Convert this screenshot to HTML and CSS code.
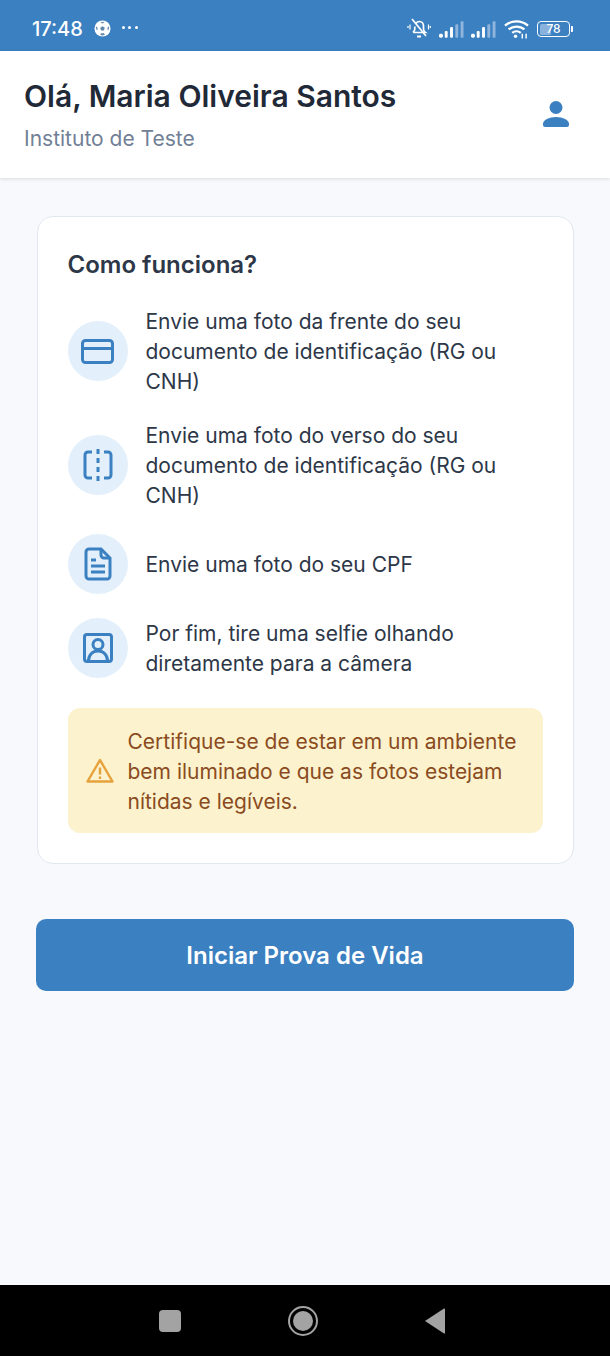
FILE: index.html
```html
<!DOCTYPE html>
<html lang="pt-BR">

<head>
    <meta charset="UTF-8">
    <title>Prova de Vida</title>
    <link rel="stylesheet" href="styles.css">
</head>

<body>
    <div class="status-bar">
        <div class="status-left">
            <span class="hora">17:48</span>
            <svg class="bola" width="17" height="17" viewBox="0 0 18 18">
                <circle cx="9" cy="9" r="8.5" fill="#fff" />
                <path d="M9 6.500l2.400 1.700-.9 2.800h-3l-.9-2.800zM7 1.500L9 2.400l2-.9-.6 1.500L9 3.600l-1.400-.6zM1.800 7l1.500.4.600 2.400-1 1.300zM16.200 7l-1.500.4-.6 2.400 1 1.300zM7.400 14h3.200l.8 1.500-2.400 1-2.400-1z" fill="#5f86ad" />
            </svg>
            <span class="pontos"><i></i><i></i><i></i></span>
        </div>
        <div class="status-right">
            <svg class="campainha" width="24" height="24" viewBox="0 0 24 24" fill="none" stroke="#fff" stroke-width="1.7">
                <path d="M8.600 7.200C9.300 5.600 10.500 4.500 12.500 4.500c2.400 0 4 2 4 4.500v3c0 1.500.5 2.500 1.800 3.500H6.500" />
                <path d="M7.800 9.500V12c0 1.500-.6 2.500-1.800 3.500" />
                <path d="M5 2l14 17" />
                <path d="M10 19.500h4" stroke-width="2" />
                <path d="M3 7.500v5M1 9v2M21.500 7.500v5M23.300 9v2" stroke-width="1.200" />
            </svg>
            <svg class="sinal" width="25" height="17" viewBox="0 0 26 17">
                <g fill="#fff">
                    <rect x="0" y="13" width="4" height="4" rx="1.500" />
                    <rect x="6" y="10" width="3" height="7" rx="1" />
                    <rect x="11.500" y="6" width="3" height="11" rx="1" />
                </g>
                <g fill="#8fb5dc">
                    <rect x="17" y="3" width="3" height="14" rx="1" />
                    <rect x="22.500" y="0" width="3" height="17" rx="1" />
                </g>
            </svg>
            <svg class="sinal" width="25" height="17" viewBox="0 0 26 17">
                <g fill="#fff">
                    <rect x="0" y="13" width="4" height="4" rx="1.500" />
                    <rect x="6" y="10" width="3" height="7" rx="1" />
                    <rect x="11.500" y="6" width="3" height="11" rx="1" />
                </g>
                <g fill="#8fb5dc">
                    <rect x="17" y="3" width="3" height="14" rx="1" />
                    <rect x="22.500" y="0" width="3" height="17" rx="1" />
                </g>
            </svg>
            <svg class="wifi" width="25" height="20" viewBox="0 0 26 20" fill="none" stroke="#fff" stroke-width="2.400">
                <path d="M1 6.500c6.800-6 17.200-6 24 0" />
                <path d="M4.800 10.500c4.700-4 11.700-4 16.400 0" />
                <path d="M8.600 14c2.500-2 6.300-2 8.800 0" />
                <circle cx="12" cy="17.500" r="1.800" fill="#fff" stroke="none" />
                <path d="M19 15v5M23 15v5" stroke-width="1.500" />
            </svg>
            <div class="bateria">
                <div class="bateria-corpo">
                    <div class="bateria-nivel"></div>
                    <span>78</span>
                </div>
                <div class="bateria-ponta"></div>
            </div>
        </div>
    </div>

    <header class="topo">
        <div>
            <h1>Olá, Maria Oliveira Santos</h1>
            <p>Instituto de Teste</p>
        </div>
        <svg class="perfil" width="26" height="26" viewBox="0 0 26 26" fill="#3b80c1">
            <circle cx="13" cy="6.500" r="6.500" />
            <path d="M2 26a2 2 0 0 1-2-2v-1c0-4 6-7 13-7s13 3 13 7v1a2 2 0 0 1-2 2z" />
        </svg>
    </header>

    <main class="conteudo">
        <section class="card">
            <h2>Como funciona?</h2>
            <ul class="passos">
                <li class="passo">
                    <div class="passo-icone">
                        <svg width="33" height="25" viewBox="0 0 33 25" fill="none" stroke="#3b80c1" stroke-width="3">
                            <rect x="1.500" y="1.500" width="30" height="22" rx="3" />
                            <path d="M1.500 9.500h30" />
                        </svg>
                    </div>
                    <p>Envie uma foto da frente do seu documento de identificação (RG ou CNH)</p>
                </li>
                <li class="passo">
                    <div class="passo-icone">
                        <svg width="30" height="32" viewBox="0 0 30 32" fill="none" stroke="#3b80c1" stroke-width="3">
                            <path d="M9 3H5a3 3 0 0 0-3 3v20a3 3 0 0 0 3 3h4M21 3h4a3 3 0 0 1 3 3v20a3 3 0 0 1-3 3h-4" />
                            <path d="M15 0v5M15 9v5M15 18v5M15 27v5" />
                        </svg>
                    </div>
                    <p>Envie uma foto do verso do seu documento de identificação (RG ou CNH)</p>
                </li>
                <li class="passo">
                    <div class="passo-icone">
                        <svg width="28" height="34" viewBox="0 0 28 34" fill="none" stroke="#3b80c1" stroke-width="3">
                            <path d="M17 2H5a3 3 0 0 0-3 3v24a3 3 0 0 0 3 3h18a3 3 0 0 0 3-3V11z" />
                            <path d="M17 2v6a3 3 0 0 0 3 3h6" />
                            <path d="M7 13h5M7 19h14M7 25h14" />
                        </svg>
                    </div>
                    <p>Envie uma foto do seu CPF</p>
                </li>
                <li class="passo">
                    <div class="passo-icone">
                        <svg width="30" height="30" viewBox="0 0 30 30" fill="none" stroke="#3b80c1" stroke-width="3">
                            <rect x="1.500" y="1.500" width="27" height="27" rx="2.500" />
                            <circle cx="15" cy="11.500" r="5" />
                            <path d="M5.500 28c0-6 4-10 9.500-10s9.500 4 9.500 10" />
                        </svg>
                    </div>
                    <p>Por fim, tire uma selfie olhando diretamente para a câmera</p>
                </li>
            </ul>
            <div class="aviso">
                <svg width="28" height="26" viewBox="0 0 28 26" fill="none" stroke="#e6a23c" stroke-width="2.400" stroke-linejoin="round">
                    <path d="M14 2L1.500 23.500h25z" />
                    <path d="M14 9.500v7M14 18.500v2.500" />
                </svg>
                <p>Certifique-se de estar em um ambiente bem iluminado e que as fotos estejam nítidas e legíveis.</p>
            </div>
        </section>

        <button class="botao">Iniciar Prova de Vida</button>
    </main>

    <div class="nav-bar">
        <div class="nav-quadrado"></div>
        <div class="nav-circulo"></div>
        <svg width="22" height="26" viewBox="0 0 22 26">
            <path d="M21 1v24a.800.800 0 0 1-1 .500L1 13 20 .500a.800.800 0 0 1 1 .500z" fill="#a3a3a3" />
        </svg>
    </div>
</body>

</html>
```

FILE: styles.css
```css
* {
    box-sizing: border-box;
    padding: 0;
    margin: 0;
}

body {
    width: 610px;
    height: 1356px;
    display: flex;
    flex-direction: column;
    font-family: Inter, "Noto Sans", sans-serif;
    background: #f7f9fd;
    color: #2d3748;
    overflow: hidden;
}

.status-bar {
    height: 51px;
    flex-shrink: 0;
    background: #3b80c1;
    color: #fff;
    display: flex;
    justify-content: space-between;
    align-items: center;
    padding: 7px 37px 0 32px;
}

.status-left,
.status-right {
    display: flex;
    align-items: center;
}

.hora {
    font-size: 20px;
    font-weight: 500;
}

.bola {
    margin-left: 11px;
    margin-top: -2px;
}

.pontos {
    display: flex;
    gap: 3.5px;
    margin-left: 11px;
    margin-top: -3px;
}

.pontos i {
    width: 3px;
    height: 3px;
    border-radius: 50%;
    background: #fff;
}

.status-right {
    gap: 8px;
}

.sinal {
    margin-top: 1px;
}

.sinal + .sinal {
    margin-left: -1px;
}

.bateria {
    display: flex;
    align-items: center;
    gap: 1px;
}

.bateria-corpo {
    position: relative;
    width: 33px;
    height: 16px;
    border: 1.5px solid #fff;
    border-radius: 4px;
    padding: 1.5px;
    display: flex;
}

.bateria-nivel {
    width: 40%;
    background: #89b3dc;
    border-radius: 1.5px;
}

.bateria-corpo span {
    position: absolute;
    inset: 0;
    text-align: center;
    font-size: 12px;
    line-height: 13px;
    font-weight: 500;
}

.bateria-ponta {
    width: 2px;
    height: 6px;
    background: #fff;
    border-radius: 0 1px 1px 0;
}

.topo {
    height: 127px;
    flex-shrink: 0;
    background: #fff;
    display: flex;
    justify-content: space-between;
    align-items: center;
    padding: 2px 41px 0 24px;
    box-shadow: 0 1px 4px rgba(0, 0, 0, .12);
}

.topo h1 {
    font-size: 30px;
    line-height: 36px;
    font-weight: 600;
    color: #1f2937;
    margin-bottom: 11px;
}

.topo p {
    font-size: 21px;
    line-height: 28px;
    color: #718096;
}

.perfil {
    margin-top: -3px;
}

.conteudo {
    flex: 1;
    padding: 38px 36px 0;
}

.card {
    background: #fff;
    border: 1px solid #e2e8f0;
    border-radius: 16px;
    padding: 31px 30px 30px;
    margin: 0 0 55px 0.5px;
    width: 537px;
}

.card h2 {
    font-size: 24px;
    line-height: 34px;
    font-weight: 600;
    margin-bottom: 24px;
}

.passos {
    list-style: none;
    display: flex;
    flex-direction: column;
    gap: 24px;
}

.passo {
    display: flex;
    align-items: center;
    gap: 18px;
}

.passo p {
    font-size: 21px;
    line-height: 30px;
    margin: 1px 0 -1px;
}

.passo-icone {
    width: 60px;
    height: 60px;
    flex-shrink: 0;
    border-radius: 50%;
    background: #e3f0fb;
    display: flex;
    align-items: center;
    justify-content: center;
}

.aviso {
    margin-top: 30px;
    background: #fcf2cd;
    border-radius: 12px;
    padding: 18px 18px 17px;
    display: flex;
    align-items: center;
    gap: 14px;
    color: #8a4b1f;
}

.aviso svg {
    flex-shrink: 0;
}

.aviso p {
    font-size: 21px;
    line-height: 30px;
    margin: 1px 0 -1px;
}

.botao {
    display: block;
    width: 538px;
    height: 72px;
    border: 0;
    border-radius: 10px;
    background: #3b80c1;
    color: #fff;
    font-family: inherit;
    font-size: 24px;
    font-weight: 600;
}

.nav-bar {
    height: 71px;
    flex-shrink: 0;
    background: #000;
    display: flex;
    align-items: center;
    justify-content: space-between;
    padding: 0 164px 0 159px;
}

.nav-quadrado {
    width: 22px;
    height: 22px;
    border-radius: 4px;
    background: #a3a3a3;
}

.nav-circulo {
    width: 30px;
    height: 30px;
    border-radius: 50%;
    border: 2.5px solid #a3a3a3;
    padding: 3px;
    background: #a3a3a3 content-box;
}
```
